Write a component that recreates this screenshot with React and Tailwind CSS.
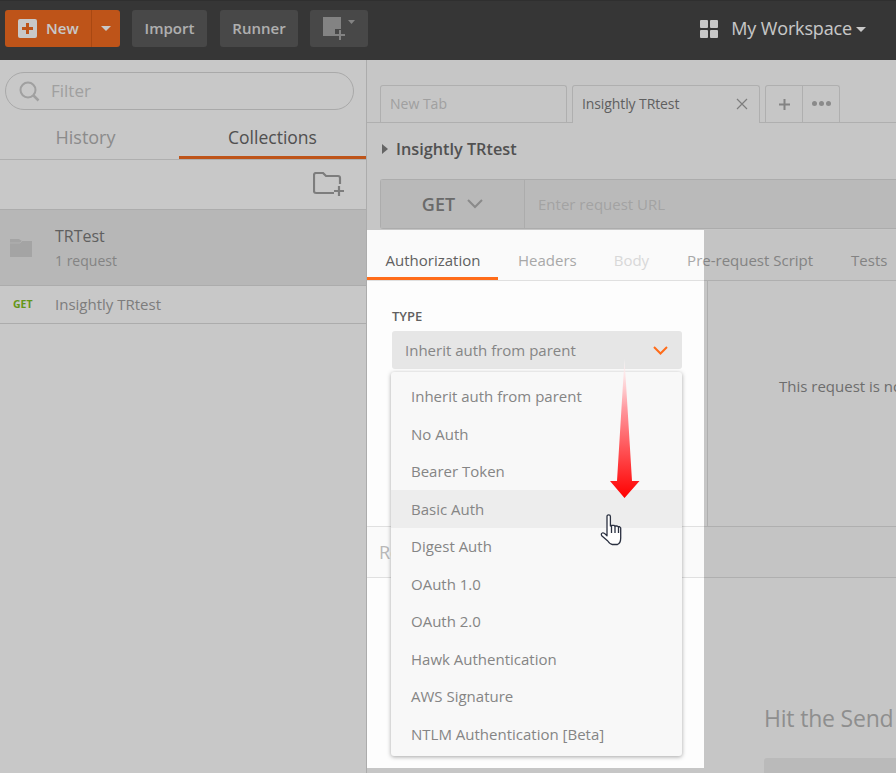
import React from "react";

const authTypes = [
  "Inherit auth from parent",
  "No Auth",
  "Bearer Token",
  "Basic Auth",
  "Digest Auth",
  "OAuth 1.0",
  "OAuth 2.0",
  "Hawk Authentication",
  "AWS Signature",
  "NTLM Authentication [Beta]",
];

const Header = () => (
  <header className="flex h-[60px] shrink-0 items-center border-t border-[#3c3c3c] bg-[#464646] pb-[4px] pl-[5px] pr-[30px]">
    <div className="flex h-[37px] w-[115px] rounded-[3px] bg-[#f26b21] text-white">
      <div className="flex w-[87px] items-center border-r border-[#d85c18] pl-[13px]">
        <span className="flex h-[19px] w-[19px] items-center justify-center rounded-[2px] bg-white">
          <svg width="13" height="13" viewBox="0 0 13 13">
            <path d="M5 1h3v4h4v3H8v4H5V8H1V5h4z" fill="#f26b21" />
          </svg>
        </span>
        <span className="ml-[9px] text-[15px] font-semibold">New</span>
      </div>
      <div className="flex flex-1 items-center justify-center">
        <span className="h-0 w-0 border-x-[5px] border-t-[5px] border-x-transparent border-t-white" />
      </div>
    </div>
    <button className="ml-3 h-[37px] w-[75px] rounded-[3px] bg-[#5c5c5c] text-[15px] font-semibold text-[#e0e0e0]">
      Import
    </button>
    <button className="ml-[13px] h-[37px] w-[78px] rounded-[3px] bg-[#5c5c5c] text-[15px] font-semibold text-[#e0e0e0]">
      Runner
    </button>
    <button className="ml-3 flex h-[37px] w-[58px] items-start rounded-[3px] bg-[#5c5c5c] pl-[13px] pt-[7px]">
      <svg width="34" height="24" viewBox="0 0 34 24">
        <path d="M0 0h18v12h-6v7H0z" fill="#a8a8a8" />
        <path d="M12 19h10M17 14v10" stroke="#a8a8a8" strokeWidth="2" fill="none" transform="translate(0 -1)" />
        <path d="M25 3h7l-3.5 4z" fill="#a8a8a8" />
      </svg>
    </button>
    <div className="ml-auto flex items-center text-white">
      <svg width="20" height="20" viewBox="0 0 20 20" fill="#fff">
        <rect x="1" y="1" width="8" height="8" rx="1" />
        <rect x="11" y="1" width="8" height="8" rx="1" />
        <rect x="1" y="11" width="8" height="8" rx="1" />
        <rect x="11" y="11" width="8" height="8" rx="1" />
      </svg>
      <span className="ml-[12px] text-[18px] tracking-[-0.15px]">My Workspace</span>
      <span className="ml-[4px] mt-[2px] h-0 w-0 border-x-[5px] border-t-[5px] border-x-transparent border-t-white" />
    </div>
  </header>
);

const Sidebar = () => (
  <aside className="flex w-[367px] shrink-0 flex-col border-r border-[#dcdcdc] bg-white">
    <div className="px-[5px] pt-3">
      <div className="flex h-[38px] w-[349px] items-center rounded-full border border-[#d8d8d8] pl-[12px]">
        <svg width="22" height="22" viewBox="0 0 22 22" fill="none" stroke="#cccccc" strokeWidth="2">
          <circle cx="10" cy="10" r="7.5" />
          <path d="M15.5 15.5l5 5" strokeWidth="2.5" />
        </svg>
        <span className="ml-[11px] text-[17px] text-[#cccccc]">Filter</span>
      </div>
    </div>
    <div className="mt-[10px] flex h-[40px] border-b border-[#e0e0e0]">
      <div className="flex w-[171px] items-center justify-center pb-[5px] text-[18px] text-[#b2b2b2]">History</div>
      <div className="ml-[8px] flex flex-1 items-center justify-center border-b-[3px] border-[#f26b21] pb-[2px] text-[17.5px] text-[#666666]">
        Collections
      </div>
    </div>
    <div className="flex h-[50px] items-center justify-end border-b border-[#dcdcdc] pr-[20px]">
      <svg width="33" height="25" viewBox="0 0 33 25" fill="none" stroke="#a0a0a0" strokeWidth="2.200">
        <path d="M21 21H3a2 2 0 0 1-2-2V3a2 2 0 0 1 2-2h7l3 3h12a2 2 0 0 1 2 2v6" />
        <path d="M26 14v10M21 19h10" />
      </svg>
    </div>
    <div className="flex h-[76px] items-center border-b border-[#dcdcdc] bg-[#eaeaea] pl-[10px]">
      <svg width="22" height="18" viewBox="0 0 22 18" className="mt-[1px]">
        <path d="M0 0h9l3 2h10v16H0z" fill="#d2d2d2" />
        <path d="M0 4h10l2-2" stroke="#e4e4e4" strokeWidth="0.800" fill="none" />
      </svg>
      <div className="ml-[23px]">
        <div className="text-[16px] leading-[24px] text-[#7a7a7a]">TRTest</div>
        <div className="mt-[3px] text-[14px] leading-[20px] text-[#a8a8a8]">1 request</div>
      </div>
    </div>
    <div className="flex h-[38px] items-center border-b border-[#dcdcdc]">
      <span className="ml-[13px] w-[42px] text-[10.5px] font-bold text-[#80c020]">GET</span>
      <span className="text-[15px] text-[#a0a0a0]">Insightly TRtest</span>
    </div>
  </aside>
);

const MainPane = () => (
  <main className="flex min-w-0 flex-1 flex-col bg-[#fdfdfd]">
    <div className="flex h-[63px] shrink-0 items-end border-b border-[#e0e0e0] pl-[13px]">
      <div className="mb-[-1px] flex h-[38px] w-[187px] items-center rounded-t-[3px] border border-b-0 border-[#e0e0e0] pb-[2px] pl-[9px] text-[14px] text-[#cccccc]">
        New Tab
      </div>
      <div className="relative mb-[-1px] ml-[5px] flex h-[38px] w-[188px] items-center rounded-t-[3px] border border-b-0 border-[#e0e0e0] bg-[#fdfdfd] pb-[2px] pl-[9px] text-[14px] tracking-[-0.1px] text-[#7a7a7a]">
        Insightly TRtest
        <svg width="12" height="12" viewBox="0 0 12 12" className="ml-auto mr-[11px]" stroke="#a0a0a0" strokeWidth="1.200">
          <path d="M1 1l10 10M11 1L1 11" />
        </svg>
      </div>
      <div className="mb-[-1px] ml-[5px] flex h-[38px] w-[38px] items-center justify-center rounded-tl-[3px] border border-b-0 border-[#e0e0e0]">
        <svg width="11" height="11" viewBox="0 0 11 11" stroke="#a8a8a8" strokeWidth="2">
          <path d="M5.500 0v11M0 5.500h11" />
        </svg>
      </div>
      <div className="mb-[-1px] flex h-[38px] w-[37px] items-center justify-center gap-[2px] rounded-tr-[3px] border border-b-0 border-l-0 border-[#e0e0e0] pb-[2px]">
        <span className="h-[5px] w-[5px] rounded-full bg-[#b0b0b0]" />
        <span className="h-[5px] w-[5px] rounded-full bg-[#b0b0b0]" />
        <span className="h-[5px] w-[5px] rounded-full bg-[#b0b0b0]" />
      </div>
    </div>
    <div className="flex h-[56px] shrink-0 items-center pb-[4px] pl-[15px]">
      <span className="h-0 w-0 border-y-[5px] border-l-[6px] border-y-transparent border-l-[#808080]" />
      <span className="ml-[8px] text-[16.25px] font-semibold text-[#686868]">Insightly TRtest</span>
    </div>
    <div className="ml-[13px] flex h-[50px] shrink-0 rounded-l-[3px] border border-r-0 border-[#dcdcdc] bg-[#eeeeee]">
      <div className="flex w-[144px] items-center justify-center border-r border-[#dcdcdc] bg-[#ececec] text-[18px] font-semibold text-[#888888]">
        GET
        <svg width="16" height="10" viewBox="0 0 16 10" fill="none" stroke="#b0b0b0" strokeWidth="2" className="ml-[12px]">
          <path d="M1 1l7 7 7-7" />
        </svg>
      </div>
      <div className="flex flex-1 items-center pl-[13px] text-[15px] text-[#d0d0d0]">Enter request URL</div>
    </div>
    <div className="mt-[1px] flex h-[51px] shrink-0 items-end whitespace-nowrap border-b border-[#e0e0e0] bg-[#fafafa] text-[15px]">
      <div className="flex h-[40px] w-[131px] items-start justify-center border-b-[3px] border-[#ff6c1a] pl-[1px] pt-[9px] text-[#606060]">
        Authorization
      </div>
      <div className="flex h-[40px] items-start pt-[9px]">
        <span className="ml-[20px] text-[#a8a8a8]">Headers</span>
        <span className="ml-[37px] text-[#d8d8d8]">Body</span>
        <span className="ml-[38px] text-[#a8a8a8]">Pre-request Script</span>
        <span className="ml-[38px] text-[#a8a8a8]">Tests</span>
      </div>
    </div>
    <div className="flex h-[245px] shrink-0">
      <div className="w-[341px] shrink-0 border-r border-[#e0e0e0] pl-[25px] pt-[27px]">
        <div className="text-[13px] font-semibold leading-[16px] text-[#606060]">TYPE</div>
        <div className="mt-[7px] flex h-[38px] w-[290px] items-center rounded-[3px] bg-[#e6e6e6] pl-[13px] pr-[14px] text-[15px] text-[#858585]">
          Inherit auth from parent
          <svg width="15" height="9" viewBox="0 0 15 9" fill="none" stroke="#ff6c1a" strokeWidth="2" className="ml-auto">
            <path d="M1 1l6.500 6.500L14 1" />
          </svg>
        </div>
      </div>
      <div className="flex-1 whitespace-nowrap pl-[71px] pt-[94px] text-[15px] text-[#8c8c8c]">
        This request is not inheriting any authorization helper at the moment.
      </div>
    </div>
    <div className="flex h-[52px] shrink-0 items-center border-y border-[#e0e0e0] bg-[#fafafa] pl-[12px] text-[18px] text-[#b8b8b8]">
      Response
    </div>
    <div className="flex flex-1 flex-col items-start pl-[397px] pt-[123px]">
      <div className="whitespace-nowrap text-[23px] tracking-[-0.2px] text-[#b6b6b6]">Hit the Send button to get a response.</div>
      <div className="mt-[22px] h-[40px] w-[400px] rounded-[3px] bg-[#eeeeee]" />
    </div>
  </main>
);

const AuthMenu = () => (
  <div className="absolute left-[391px] top-[372px] w-[291px] rounded-[3px] bg-[#f8f8f8] pb-[3.5px] pt-[5.5px] shadow-[0_1px_4px_rgba(0,0,0,0.35)]">
    {authTypes.map((t) => (
      <div
        key={t}
        className={`flex h-[37.500px] items-center pl-[20px] text-[15px] text-[#858585] ${t === "Basic Auth" ? "bg-[#ededed]" : ""}`}
      >
        {t}
      </div>
    ))}
  </div>
);

const RedArrow = () => (
  <svg width="30" height="140" viewBox="0 0 30 140" className="absolute left-[610px] top-[359px]">
    <defs>
      <linearGradient id="arrowFill" x1="0" y1="0" x2="0" y2="1">
        <stop offset="0" stopColor="#ffffff" stopOpacity="0.600" />
        <stop offset="0.350" stopColor="#ff9aa0" />
        <stop offset="1" stopColor="#ff0000" />
      </linearGradient>
    </defs>
    <path d="M14.500 0L22 122h7.500L14.500 139 0 122h7z" fill="url(#arrowFill)" />
  </svg>
);

const HandCursor = () => (
  <svg width="24" height="32" viewBox="0 0 24 32" className="absolute left-[600px] top-[514px]">
    <path
      d="M7 2.500a1.700 1.700 0 0 1 3.400 0V12l1.200-.6h2.300l1 .6h2.200l1.100.7h1.300l1.200 1.200V24c0 3-1.500 5.800-3.200 6.500h-5.200c-1.800 0-3-1.300-4.500-3.500L2 22c-1-1.300-.8-2.600.2-3 1-.5 2.300.2 3.300 1.300l1.500 1.500z"
      fill="#ffffff"
      stroke="#2a3040"
      strokeWidth="1.300"
      strokeLinejoin="round"
    />
    <path d="M11.500 12v7M15 12v7M18.500 13v6" stroke="#2a3040" strokeWidth="1.300" fill="none" />
  </svg>
);

const App = () => (
  <div className="relative h-[773px] w-[896px] overflow-hidden bg-white font-['Open_Sans',sans-serif]">
    <div className="flex h-full flex-col">
      <Header />
      <div className="flex min-h-0 flex-1">
        <Sidebar />
        <MainPane />
      </div>
    </div>
    <AuthMenu />
    {/* everything outside this box gets dimmed */}
    <div className="pointer-events-none absolute left-[367px] top-[230px] h-[538px] w-[337px] shadow-[0_0_0_1000px_rgba(0,0,0,0.215)]" />
    <RedArrow />
    <HandCursor />
  </div>
);

export default App;
